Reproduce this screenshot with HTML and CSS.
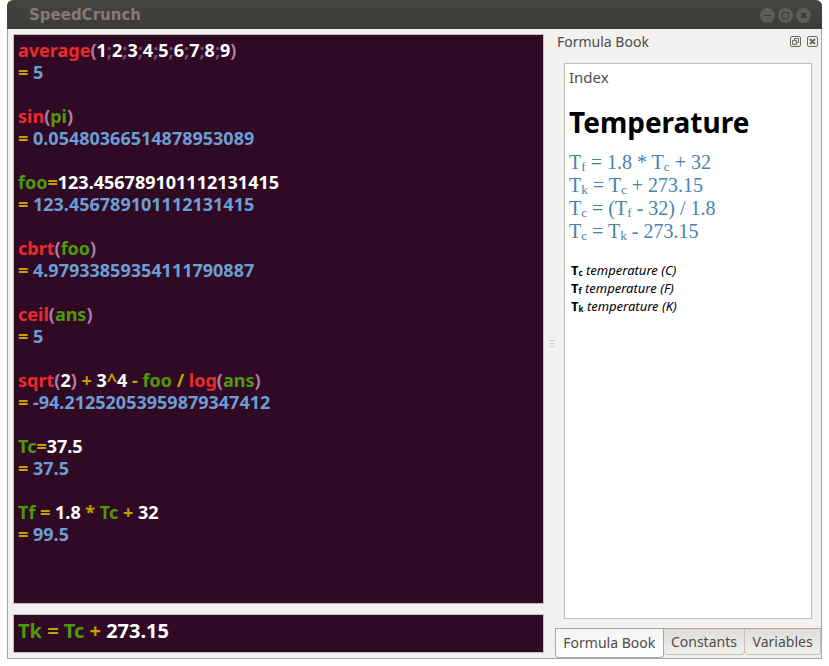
FILE: index.html
```html
<!DOCTYPE html>
<html lang="en">
<head>
<meta charset="utf-8">
<title>SpeedCrunch</title>
<link rel="stylesheet" href="styles.css">
</head>
<body>
<div class="window">
  <header class="titlebar">
    <h1 class="title">SpeedCrunch</h1>
    <div class="window-buttons">
      <button type="button" class="round" aria-label="Minimize"><svg viewBox="0 0 15 15"><path d="M4 7.500h7"/></svg></button>
      <button type="button" class="round" aria-label="Maximize"><svg viewBox="0 0 15 15"><path d="M4.500 4.500h6v6h-6z"/></svg></button>
      <button type="button" class="round" aria-label="Close"><svg viewBox="0 0 15 15"><path class="thick" d="M5 5l5 5M10 5l-5 5"/></svg></button>
    </div>
  </header>
  <div class="content">
    <main class="calculator">
      <section class="history" aria-label="History">
        <div class="entry"><p><b class="fn">average</b><b class="par">(</b>1<b class="sep">;</b>2<b class="sep">;</b>3<b class="sep">;</b>4<b class="sep">;</b>5<b class="sep">;</b>6<b class="sep">;</b>7<b class="sep">;</b>8<b class="sep">;</b>9<b class="par">)</b></p><p class="result"><b class="op">=</b> 5</p></div>
        <div class="entry"><p><b class="fn">sin</b><b class="par">(</b><b class="var">pi</b><b class="par">)</b></p><p class="result"><b class="op">=</b> 0.05480366514878953089</p></div>
        <div class="entry"><p><b class="var">foo</b><b class="op">=</b>123.456789101112131415</p><p class="result"><b class="op">=</b> 123.456789101112131415</p></div>
        <div class="entry"><p><b class="fn">cbrt</b><b class="par">(</b><b class="var">foo</b><b class="par">)</b></p><p class="result"><b class="op">=</b> 4.97933859354111790887</p></div>
        <div class="entry"><p><b class="fn">ceil</b><b class="par">(</b><b class="var">ans</b><b class="par">)</b></p><p class="result"><b class="op">=</b> 5</p></div>
        <div class="entry"><p><b class="fn">sqrt</b><b class="par">(</b>2<b class="par">)</b> <b class="op">+</b> 3<b class="op">^</b>4 <b class="op">-</b> <b class="var">foo</b> <b class="op">/</b> <b class="fn">log</b><b class="par">(</b><b class="var">ans</b><b class="par">)</b></p><p class="result"><b class="op">=</b> -94.21252053959879347412</p></div>
        <div class="entry"><p><b class="var">Tc</b><b class="op">=</b>37.5</p><p class="result"><b class="op">=</b> 37.5</p></div>
        <div class="entry"><p><b class="var">Tf</b> <b class="op">=</b> 1.8 <b class="op">*</b> <b class="var">Tc</b> <b class="op">+</b> 32</p><p class="result"><b class="op">=</b> 99.5</p></div>
      </section>
      <div class="editor">
        <div class="highlight" aria-hidden="true"><b class="var">Tk</b> <b class="op">=</b> <b class="var">Tc</b> <b class="op">+</b> 273.15</div>
        <input class="expression" type="text" aria-label="Expression" value="Tk = Tc + 273.15" spellcheck="false">
      </div>
    </main>
    <div class="splitter"><i></i><i></i><i></i></div>
    <aside class="dock">
      <div class="dock-title">
        <h2>Formula Book</h2>
        <button type="button" class="dock-button" aria-label="Float"><svg viewBox="0 0 11 11"><rect x=".5" y=".5" width="10" height="10" rx="1.500"/><path d="M4.500 4.500v-2h4v4h-2M2.500 4.500h4v4h-4z"/></svg></button>
        <button type="button" class="dock-button" aria-label="Close dock"><svg viewBox="0 0 11 11"><rect x=".5" y=".5" width="10" height="10" rx="1.500"/><path class="cross" d="M3 3l5 5M8 3l-5 5"/></svg></button>
      </div>
      <article class="book">
        <a class="index" href="#index">Index</a>
        <h3>Temperature</h3>
        <ul class="formulas">
          <li><a href="#tf">T<sub>f</sub> = 1.8 * T<sub>c</sub> + 32</a></li>
          <li><a href="#tk">T<sub>k</sub> = T<sub>c</sub> + 273.15</a></li>
          <li><a href="#tc">T<sub>c</sub> = (T<sub>f</sub> - 32) / 1.8</a></li>
          <li><a href="#tck">T<sub>c</sub> = T<sub>k</sub> - 273.15</a></li>
        </ul>
        <ul class="legend">
          <li><b>T<sub>c</sub></b> <i>temperature (C)</i></li>
          <li><b>T<sub>f</sub></b> <i>temperature (F)</i></li>
          <li><b>T<sub>k</sub></b> <i>temperature (K)</i></li>
        </ul>
      </article>
      <div class="tabs" role="tablist">
        <button type="button" role="tab" aria-selected="true" class="tab active">Formula Book</button>
        <button type="button" role="tab" aria-selected="false" class="tab">Constants</button>
        <button type="button" role="tab" aria-selected="false" class="tab">Variables</button>
      </div>
    </aside>
  </div>
</div>
</body>
</html>
```
FILE: styles.css
```css
* { box-sizing: border-box; }
body { margin: 0; background: #fff; font-family: "Noto Sans", sans-serif; }
h1, h2, h3, p, ul { margin: 0; padding: 0; }
ul { list-style: none; }
a { text-decoration: none; }
b { font-weight: 700; }
button { font: inherit; padding: 0; border: 0; }

.window {
  display: flex;
  flex-direction: column;
  height: calc(100vh - 7px);
  margin: 0 7px;
  border: 1px solid #aaa8a3;
  border-top: 0;
  border-radius: 6px 6px 0 0;
  background: #f2f1ef;
}
.titlebar {
  display: flex;
  align-items: center;
  justify-content: space-between;
  flex: none;
  height: 29px;
  margin: 0 -1px;
  padding: 0 11px 0 22px;
  border-radius: 6px 6px 0 0;
  background: linear-gradient(#45443f, #3c3b37);
}
.title { font: bold 15px/28px "DejaVu Sans", sans-serif; color: #807d78; }
.window-buttons { display: flex; gap: 3px; padding-top: 2px; }
.round { width: 15px; height: 15px; border-radius: 50%; background: #5d5c57; }
svg { display: block; width: 100%; height: 100%; fill: none; stroke: #3a3935; }
.thick { stroke-width: 2; }

.content { display: flex; flex: 1; min-height: 0; }
.calculator {
  display: flex;
  flex: 1;
  flex-direction: column;
  gap: 10px;
  min-width: 0;
  padding: 5px 0 5px 5px;
  font-size: 18px;
  font-weight: bold;
  line-height: 22px;
  color: #fff;
}
.history { flex: 1; padding: 4px; overflow: hidden; border: 1px solid #c3bfba; background: #300a24; }
.entry { margin-bottom: 22px; }
.result { color: #6b9fd4; }
.fn { color: #ef2929; }
.par { color: #ad7fa8; }
.sep { color: #6a5283; }
.var { color: #4e9a06; }
.op { color: #c4a000; }
.editor { position: relative; height: 39px; padding: 5px 4px; border: 1px solid #c3bfba; background: #300a24; font-size: 20px; }
.expression {
  position: absolute;
  inset: 0;
  width: 100%;
  padding: 0 4px 6px;
  border: 0;
  outline: 0;
  background: transparent;
  font: inherit;
  color: transparent;
  caret-color: #fff;
}

.splitter { display: flex; flex-direction: column; gap: 2px; align-items: center; justify-content: center; width: 11px; padding-left: 4px; }
.splitter i { width: 4px; height: 1px; background: #ccc9c4; }

.dock { display: flex; flex-direction: column; width: 266px; color: #4c4c4c; }
.dock-title { display: flex; align-items: center; gap: 6px; height: 25px; padding: 0 3px 0 2px; }
.dock-title h2 { flex: 1; font-size: 14px; font-weight: normal; }
.dock-button { width: 11px; height: 11px; background: none; }
.dock-button svg { stroke: #6b6965; }
.dock-button .cross { stroke-width: 2; }
.book { flex: 1; margin: 9px; padding: 4px; border: 1px solid #bfbbb6; background: #fff; }
.index { display: block; font-size: 15px; line-height: 18px; color: #4c4c4c; }
.book h3 { margin-top: 16px; font-size: 28px; line-height: 40px; color: #000; }
.formulas { margin-top: 9px; font: 20px/23px "Liberation Serif", serif; }
.formulas a { color: #4682b4; }
sub { font-size: 66%; line-height: 0; vertical-align: -2px; }
.legend { margin: 18px 2px; font: 13px/18px "Noto Sans", sans-serif; color: #000; }
.legend sub { font-size: 8px; vertical-align: -1px; }

.tabs { display: flex; align-items: flex-start; height: 30px; border-top: 1px solid #aaa8a3; font-size: 14px; }
.tab {
  flex: auto;
  height: 26px;
  border: 1px solid #c4c1bc;
  border-width: 0 1px 1px 0;
  border-radius: 0 0 4px 4px;
  background: linear-gradient(#dfdcd8, #f2f1ef);
  color: #4c4c4c;
  white-space: nowrap;
}
.tab.active { height: 29px; padding-bottom: 1px; border: 1px solid #aaa8a3; border-top: 0; background: linear-gradient(#f5f4f3, #fff); }
```
